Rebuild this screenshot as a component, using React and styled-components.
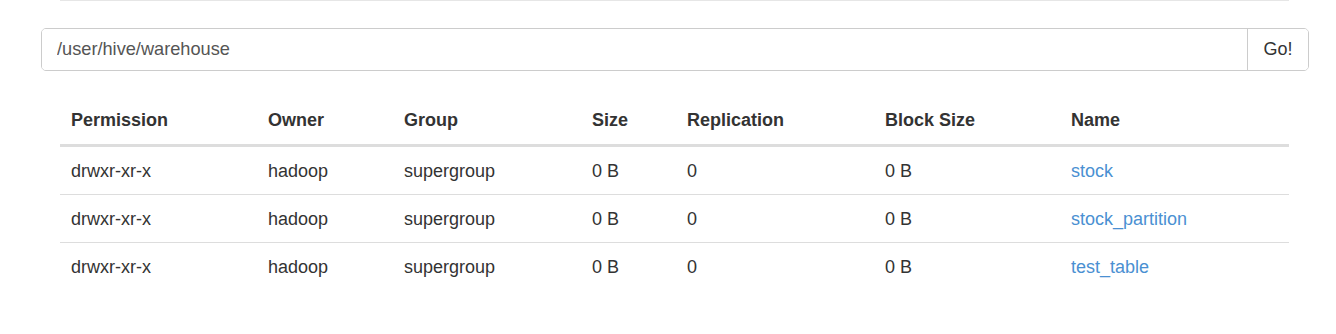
import React from 'react';
import styled, { createGlobalStyle } from 'styled-components';

const GlobalStyle = createGlobalStyle`
  html, body {
    margin: 0;
    padding: 0;
    background: #fff;
  }
  body {
    font-family: "Liberation Sans", Arial, sans-serif;
    color: #333;
  }
`;

const Page = styled.div`
  width: 1336px;
  height: 334px;
  overflow: hidden;
`;

const TopRule = styled.div`
  margin: 0 47px 0 60px;
  border-top: 1px solid #e6e6e6;
  height: 0;
`;

const SearchGroup = styled.form`
  display: flex;
  margin: 27px 27px 0 41px;
  height: 43px;
  border: 1px solid #ccc;
  border-radius: 5px;
  box-sizing: border-box;
  overflow: hidden;
`;

const PathInput = styled.input`
  flex: 1;
  border: none;
  outline: none;
  padding: 0 15px;
  font-family: inherit;
  font-size: 18.2px;
  color: #555;
  background: #fff;
`;

const GoButton = styled.button`
  width: 61px;
  border: none;
  border-left: 1px solid #ccc;
  background: #fff;
  color: #333;
  font-family: inherit;
  font-size: 18px;
  padding: 0;
  cursor: pointer;
`;

const Table = styled.table`
  margin: 26px 47px 0 60px;
  width: 1229px;
  border-collapse: collapse;
  table-layout: fixed;
  font-size: 18px;
`;

const HeadCell = styled.th`
  box-sizing: border-box;
  text-align: left;
  font-weight: 700;
  padding: 10px 11px 11px;
  line-height: 26px;
  border-bottom: 3px solid #ddd;
  width: ${(p) => p.$w}px;
`;

const Cell = styled.td`
  box-sizing: border-box;
  padding: 11px 11px 10px;
  line-height: 26px;
  border-top: ${(p) => (p.$first ? 'none' : '1px solid #ddd')};
`;

const NameLink = styled.a`
  color: #4a90d2;
  text-decoration: none;
`;

const columns = [
  ['Permission', 197],
  ['Owner', 136],
  ['Group', 188],
  ['Size', 95],
  ['Replication', 198],
  ['Block Size', 186],
  ['Name', 229],
];

const rows = ['stock', 'stock_partition', 'test_table'];

export default function App() {
  return (
    <Page>
      <GlobalStyle />
      <TopRule />
      <SearchGroup onSubmit={(e) => e.preventDefault()}>
        <PathInput defaultValue="/user/hive/warehouse" />
        <GoButton type="submit">Go!</GoButton>
      </SearchGroup>
      <Table>
        <thead>
          <tr>
            {columns.map(([label, w]) => (
              <HeadCell key={label} $w={w}>{label}</HeadCell>
            ))}
          </tr>
        </thead>
        <tbody>
          {rows.map((name, i) => (
            <tr key={name}>
              <Cell $first={i === 0}>drwxr-xr-x</Cell>
              <Cell $first={i === 0}>hadoop</Cell>
              <Cell $first={i === 0}>supergroup</Cell>
              <Cell $first={i === 0}>0 B</Cell>
              <Cell $first={i === 0}>0</Cell>
              <Cell $first={i === 0}>0 B</Cell>
              <Cell $first={i === 0}>
                <NameLink href="#">{name}</NameLink>
              </Cell>
            </tr>
          ))}
        </tbody>
      </Table>
    </Page>
  );
}
